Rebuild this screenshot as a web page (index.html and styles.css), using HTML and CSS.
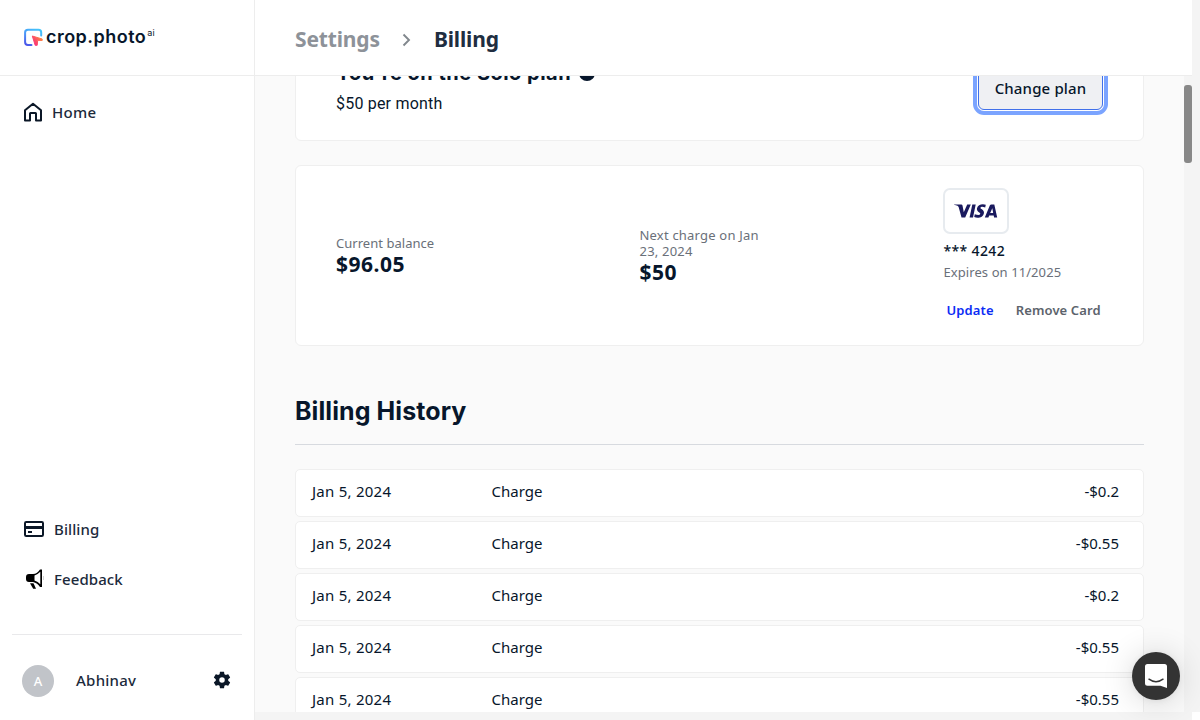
FILE: index.html
```html
<!DOCTYPE html>
<html lang="en">
<head>
<meta charset="utf-8">
<title>Billing</title>
<link rel="stylesheet" href="styles.css">
</head>
<body>
<div class="app">
  <aside class="sidebar">
    <div class="brand">
      <svg class="brand-mark" width="19" height="18" viewBox="0 0 19 18" fill="none">
        <defs>
          <linearGradient id="frame" x1="14" y1="0" x2="3" y2="18" gradientUnits="userSpaceOnUse"><stop stop-color="#43c8fb"/><stop offset=".5" stop-color="#4a9cf8"/><stop offset="1" stop-color="#4a50e8"/></linearGradient>
          <linearGradient id="cursor" x1="18" y1="10" x2="10" y2="16" gradientUnits="userSpaceOnUse"><stop stop-color="#ff8a3c"/><stop offset="1" stop-color="#f9307c"/></linearGradient>
        </defs>
        <path d="M7.500 17H4Q1.100 17 1.100 14V4.500Q1.100 1.800 4 1.800H14.500Q17.200 1.800 17.200 4.500V7.500" stroke="url(#frame)" stroke-width="2" stroke-linecap="round"/>
        <path d="M8.300 8L18.200 11V12.500L13.700 12.300L13.200 17.300H11.200Z" fill="url(#cursor)" stroke="url(#cursor)" stroke-linejoin="round"/>
      </svg>
      <span class="brand-name">crop.photo</span><span class="brand-ai">ai</span>
    </div>
    <nav class="nav-top">
      <a class="nav-item home">
        <svg width="20" height="20" viewBox="0 0 20 20" fill="none" stroke="#0b1727" stroke-width="2" stroke-linejoin="round"><path d="M2 8.200L10 1.700L18 8.200V18.500H13V11.500Q13 11 12.500 11H7.500Q7 11 7 11.500V18.500H2Z"/></svg>
        <span>Home</span>
      </a>
    </nav>
    <nav class="nav-bottom">
      <a class="nav-item">
        <svg width="20" height="16" viewBox="0 0 20 16" fill="none" stroke="#0b1727"><rect x="1" y="1" width="18" height="14" rx="1.200" stroke-width="2"/><path d="M1 6.500H19" stroke-width="3"/><path d="M4 11H8" stroke-width="2"/></svg>
        <span>Billing</span>
      </a>
      <a class="nav-item">
        <svg width="20" height="20" viewBox="0 0 20 20"><path d="M2 8Q2 5 5 5H9Q13.500 4.500 16 .4H18V18H16Q13.500 14 9 13H5Q2 13 2 10Z" fill="#000"/><path d="M10.500 6.500Q14 5.300 16.300 2.800V15.300Q14 12.800 10.500 11.600Z" fill="#fff"/><path d="M6 14.300H9.500L12 19.800H9.200Z" fill="#000"/><path d="M19.600 7.500V11" stroke="#777" stroke-width=".7" stroke-dasharray="1 1"/></svg>
        <span>Feedback</span>
      </a>
    </nav>
    <div class="account">
      <span class="avatar">A</span>
      <span class="account-name">Abhinav</span>
      <svg class="gear" width="20" height="20" viewBox="0 0 24 24" fill="#0b1727"><path d="M19.430 12.980c.04-.32.070-.64.070-.98s-.03-.66-.07-.98l2.110-1.650c.19-.15.240-.42.120-.64l-2-3.460c-.12-.22-.39-.3-.61-.22l-2.490 1c-.52-.4-1.080-.73-1.690-.98l-.38-2.650C14.460 2.180 14.250 2 14 2h-4c-.25 0-.46.180-.49.420l-.38 2.650c-.61.250-1.170.59-1.690.98l-2.490-1c-.23-.09-.49 0-.61.220l-2 3.460c-.13.220-.07.490.12.640l2.110 1.650c-.04.320-.07.650-.07.980s.03.660.070.980l-2.110 1.650c-.19.150-.24.420-.12.640l2 3.460c.12.220.390.300.610.220l2.490-1c.52.400 1.080.730 1.690.980l.38 2.650c.03.240.240.420.490.420h4c.25 0 .46-.18.490-.42l.38-2.650c.61-.25 1.170-.59 1.690-.98l2.490 1c.23.090.490 0 .61-.22l2-3.460c.12-.22.070-.49-.12-.64l-2.110-1.650zM12 15.300a3.300 3.300 0 1 1 0-6.600 3.300 3.300 0 0 1 0 6.600z"/></svg>
    </div>
  </aside>
  <main class="main">
    <header class="crumbs">
      <span class="crumb-parent">Settings</span>
      <svg class="chevron" width="9" height="14" viewBox="0 0 9 14" fill="none" stroke="#81878d" stroke-width="1.900"><path d="M1.500 1.500L7 7L1.500 12.500"/></svg>
      <span class="crumb-current">Billing</span>
    </header>
    <div class="viewport">
      <div class="content">
        <section class="card plan">
          <div>
            <h2 class="plan-title">You're on the Solo plan<i class="info-dot"></i></h2>
            <p class="plan-price">$50 per month</p>
          </div>
          <button class="change">Change plan</button>
        </section>
        <section class="card payment">
          <div class="figure"><span class="label">Current balance</span><strong>$96.05</strong></div>
          <div class="figure"><span class="label next">Next charge on Jan<br>23, 2024</span><strong>$50</strong></div>
          <div class="method">
            <div class="visa"><svg width="44" height="14" viewBox="0 0 44 14" fill="#1a1a5e"><path d="M0 .4H7.200Q8.300.4 8.500 1.500L9.800 8.200L13.200.4H16.800L11.200 13.600H7.500L4.700 3.300Q4.500 2.300 3.500 1.800Q2 1.100 0 .8Z"/><path d="M18.300.4H21.700L19 13.600H15.600Z"/><path d="M31.800.7L31.200 3.500Q26.800 2 26.400 3.900C26.200 5 30.600 5.700 29.900 9.200C29.200 13.200 24.300 14.800 20.200 13.100L20.800 10.300Q25.800 12 26.300 9.800C26.500 8.500 22.300 7.800 23 4.300C23.700.6 28.300-.7 31.800.7Z"/><path fill-rule="evenodd" d="M37.400.4H40.300L43.200 13.600H40.100L39.700 11.600H35.200L34.400 13.600H30.800L35.800 1.500Q36.300.4 37.400.4ZM36.200 9H39.200L38.300 4.200Z"/></svg></div>
            <div class="number">*** 4242</div>
            <div class="expires">Expires on 11/2025</div>
            <div class="actions"><a class="update">Update</a><a class="remove">Remove Card</a></div>
          </div>
        </section>
        <h1 class="history-title">Billing History</h1>
        <div class="history">
          <div class="row"><span class="date">Jan 5, 2024</span><span>Charge</span><span>-$0.2</span></div>
          <div class="row"><span class="date">Jan 5, 2024</span><span>Charge</span><span>-$0.55</span></div>
          <div class="row"><span class="date">Jan 5, 2024</span><span>Charge</span><span>-$0.2</span></div>
          <div class="row"><span class="date">Jan 5, 2024</span><span>Charge</span><span>-$0.55</span></div>
          <div class="row"><span class="date">Jan 5, 2024</span><span>Charge</span><span>-$0.55</span></div>
        </div>
      </div>
      <div class="track"><div class="thumb"></div></div>
    </div>
    <div class="hscroll"></div>
  </main>
  <div class="page-track"></div>
</div>
<div class="chat"><svg width="22" height="24" viewBox="0 0 22 24"><path d="M2.500 0H19.500Q22 0 22 2.500V24L15.500 21.800H2.500Q0 21.800 0 19.300V2.500Q0 0 2.500 0Z" fill="#fff"/><path d="M4 15.200Q11 20.400 18 15.200" fill="none" stroke="#333" stroke-width="1.500" stroke-linecap="round"/></svg></div>
</body>
</html>
```
FILE: styles.css
```css
* { box-sizing: border-box; }
body { margin: 0; width: 1200px; height: 720px; overflow: hidden; font-family: "Noto Sans", sans-serif; color: #07162b; background: #fff; }
h1, h2, p { margin: 0; }
.app { display: flex; height: 720px; }

.sidebar { width: 255px; flex: none; border-right: 1px solid #ededed; display: flex; flex-direction: column; }
.brand { height: 76px; border-bottom: 1px solid #ededed; display: flex; padding: 28px 0 0 24px; align-items: flex-start; }
.brand-mark { flex: none; }
.brand-name { font: 600 18px/18px Inter, sans-serif; margin-left: 3px; letter-spacing: .47px; }
.brand-ai { font: 9px/10px Inter, sans-serif; margin-left: 1px; letter-spacing: .2px; }
.nav-item { display: flex; align-items: center; font-size: 15px; line-height: 20px; font-weight: 480; letter-spacing: .08px; color: #1c2a3b; gap: 10px; }
.nav-item svg { flex: none; }
.nav-top { padding: 26px 0 0 23px; }
.nav-top .nav-item { gap: 9px; letter-spacing: .3px; }
.nav-bottom { margin-top: auto; padding-left: 24px; display: grid; gap: 30px; padding-bottom: 45px; }
.account { margin: 0 12px; border-top: 1px solid #e9e9eb; height: 86px; padding: 7px 10px 0; display: flex; align-items: center; }
.avatar { width: 32px; height: 32px; border-radius: 50%; background: #c1c4c9; color: #fff; display: grid; place-items: center; font: 500 13px/16px "Noto Sans", sans-serif; }
.account-name { margin: 0 0 2px 22px; font-size: 15px; font-weight: 480; letter-spacing: .25px; color: #1c2a3b; }
.gear { margin: 0 0 2px auto; }

.main { width: 937px; flex: none; display: flex; flex-direction: column; }
.crumbs { height: 76px; flex: none; border-bottom: 1px solid #ededed; display: flex; align-items: center; padding: 3px 0 0 40px; font-size: 21px; font-weight: 700; letter-spacing: -.15px; }
.crumb-parent { color: #8d9299; }
.crumb-current { color: #202d40; }
.chevron { margin: 2px 23px 0 22px; }
.viewport { height: 636px; display: flex; background: #fafafa; overflow: hidden; }
.content { width: 929px; padding: 0 40px; margin-top: -36px; }
.card { background: #fff; border: 1px solid #efefef; border-radius: 6px; }
.plan { height: 101px; display: flex; justify-content: space-between; padding: 19px 40px 0; }
.plan-title { font: 700 20px/26px Inter, sans-serif; letter-spacing: .48px; display: flex; align-items: center; }
.info-dot { width: 16px; height: 16px; border-radius: 50%; background: #07162b; margin-left: 8px; }
.plan-price { font: 400 16px/20px Roboto, sans-serif; margin-top: 8px; letter-spacing: .2px; }
.change { align-self: flex-start; width: 125px; height: 43px; margin: 7px 0 0; border: 1px solid #4070ea; border-radius: 6px; background: #eff0f3; box-shadow: 0 0 0 1px #fff, 0 0 0 5px #7ba4ff; font: 480 15px/20px "Noto Sans", sans-serif; letter-spacing: .15px; color: #07162b; padding: 0 0 2px; }
.payment { height: 181px; margin-top: 24px; padding: 22px 40px 0; display: grid; grid-template-columns: 303.500px 304px 1fr; }
.figure { align-self: start; margin-top: 39px; }
.figure:first-child { margin-top: 47px; }
.label { display: block; font-size: 13px; line-height: 16px; font-weight: 400; letter-spacing: .03px; color: #6a7079; }
.next { letter-spacing: .2px; }
.figure strong { display: block; font-size: 21px; line-height: 26px; letter-spacing: .5px; }
.visa { width: 66px; height: 46px; border: 2px solid #e7ebef; border-radius: 7px; display: grid; place-items: center; margin-left: -.5px; }
.number { font-size: 14px; line-height: 20px; font-weight: 530; letter-spacing: .35px; margin-top: 7px; }
.expires { font-size: 13px; line-height: 20px; font-weight: 400; color: #6a7079; letter-spacing: .08px; margin-top: 1px; }
.actions { display: flex; gap: 22px; padding-left: 3px; margin-top: 18px; font-size: 13px; line-height: 20px; font-weight: 570; letter-spacing: .12px; white-space: nowrap; }
.update { color: #0b2cf5; }
.remove { color: #5c636c; }
.history-title { font: 700 25px/32px Inter, sans-serif; letter-spacing: .08px; margin-top: 49px; padding-bottom: 17px; border-bottom: 1px solid #d7dadf; }
.history { display: grid; gap: 4px; padding-top: 24px; }
.row { height: 48px; border: 1px solid #efefef; border-radius: 5px; background: #fff; display: grid; grid-template-columns: 179.500px 1fr auto; padding: 11px 24px 0 16px; font-size: 15px; line-height: 20px; font-weight: 380; }
.date { letter-spacing: .25px; }
.track { width: 8px; background: #f4f4f4; padding-top: 9px; }
.thumb { width: 8px; height: 78px; border-radius: 3px; background: #888; }
.hscroll { height: 8px; background: #f4f4f4; }
.page-track { width: 8px; height: 712px; background: #f4f4f4; }
.chat { position: absolute; left: 1132px; top: 652px; width: 48px; height: 48px; border-radius: 50%; background: #333; display: grid; place-items: center; box-shadow: 0 1px 6px rgba(0,0,0,.06), 0 2px 32px rgba(0,0,0,.16); }
```
